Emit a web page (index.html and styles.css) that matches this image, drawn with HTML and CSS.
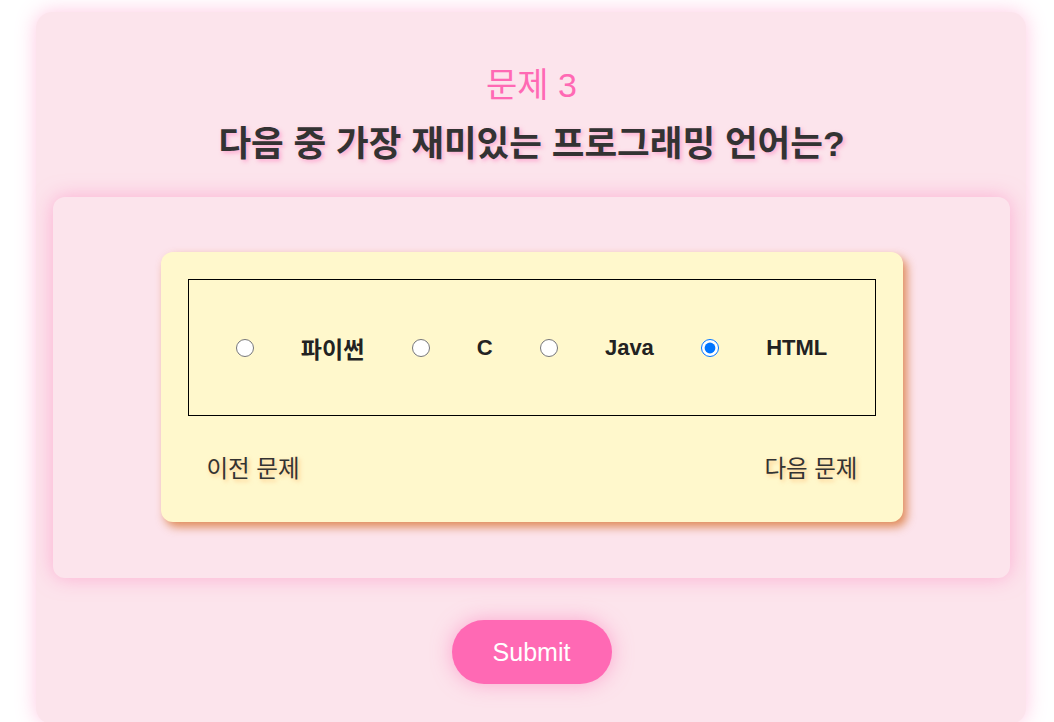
FILE: index.html
```html
<!DOCTYPE html>
<html lang="ko">
<head>
<meta charset="utf-8">
<title>Quiz</title>
<link rel="stylesheet" href="styles.css">
</head>
<body>
<div class="container">
  <h1 class="q-num">문제 3</h1>
  <h2 class="q-text">다음 중 가장 재미있는 프로그래밍 언어는?</h2>
  <div class="panel">
    <div class="card">
      <div class="options">
        <input type="radio" name="lang" id="o1"><label for="o1" class="ko">파이썬</label>
        <input type="radio" name="lang" id="o2"><label for="o2">C</label>
        <input type="radio" name="lang" id="o3"><label for="o3">Java</label>
        <input type="radio" name="lang" id="o4" checked><label for="o4">HTML</label>
      </div>
      <div class="nav">
        <a class="nav-link">이전 문제</a>
        <a class="nav-link">다음 문제</a>
      </div>
    </div>
  </div>
  <div class="actions">
    <button class="submit">Submit</button>
  </div>
</div>
</body>
</html>
```
FILE: styles.css
```css
html, body {
  margin: 0;
  padding: 0;
  background: #ffffff;
  font-family: "Liberation Sans", "Noto Sans CJK KR", sans-serif;
}
body {
  padding: 12px 0 0 36px;
}
.container {
  width: 990px;
  box-sizing: border-box;
  padding: 53px 16px 40px 17px;
  background: #fce4ec;
  border-radius: 16px;
  box-shadow: 0 0 20px rgba(255, 130, 190, 0.45);
}
.q-num {
  margin: 0;
  font-size: 34px;
  line-height: 40px;
  font-weight: normal;
  color: #ff69b4;
  text-align: center;
}
.q-text {
  margin: 18px 0 0;
  font-size: 35.5px;
  line-height: 42px;
  font-weight: bold;
  color: #333333;
  text-align: center;
  text-shadow: 2px 2px 4px rgba(255, 105, 180, 0.5);
}
.panel {
  margin-top: 32px;
  padding: 55px 0 56px;
  background: #fce4ec;
  border-radius: 12px;
  box-shadow: 0 0 20px rgba(255, 130, 190, 0.55);
}
.card {
  width: 742px;
  box-sizing: border-box;
  margin: 0 auto;
  padding: 27px;
  background: #fff8cc;
  border-radius: 12px;
  box-shadow: 4px 5px 10px rgba(214, 110, 40, 0.75);
}
.options {
  height: 135px;
  border: 1px solid #000000;
  display: flex;
  align-items: center;
  justify-content: space-evenly;
}
.options input {
  margin: 0;
  width: 18px;
  height: 18px;
}
.options label {
  font-size: 22px;
  font-weight: bold;
  color: #222222;
}
.options label.ko {
  font-size: 23px;
}
.nav {
  margin-top: 27px;
  display: flex;
  justify-content: space-between;
}
.nav-link {
  padding: 10px 18px 10px 19px;
  font-size: 23.5px;
  line-height: 32px;
  color: #333333;
  text-shadow: 2px 2px 4px rgba(255, 165, 80, 0.6);
}
.actions {
  margin-top: 42px;
  display: flex;
  justify-content: center;
}
.submit {
  width: 160px;
  height: 64px;
  border: none;
  border-radius: 32px;
  background: #ff69b4;
  color: #ffffff;
  font-family: "Liberation Sans", "Noto Sans CJK KR", sans-serif;
  font-size: 25px;
  box-shadow: 0 0 20px rgba(255, 105, 180, 0.5);
}
```
